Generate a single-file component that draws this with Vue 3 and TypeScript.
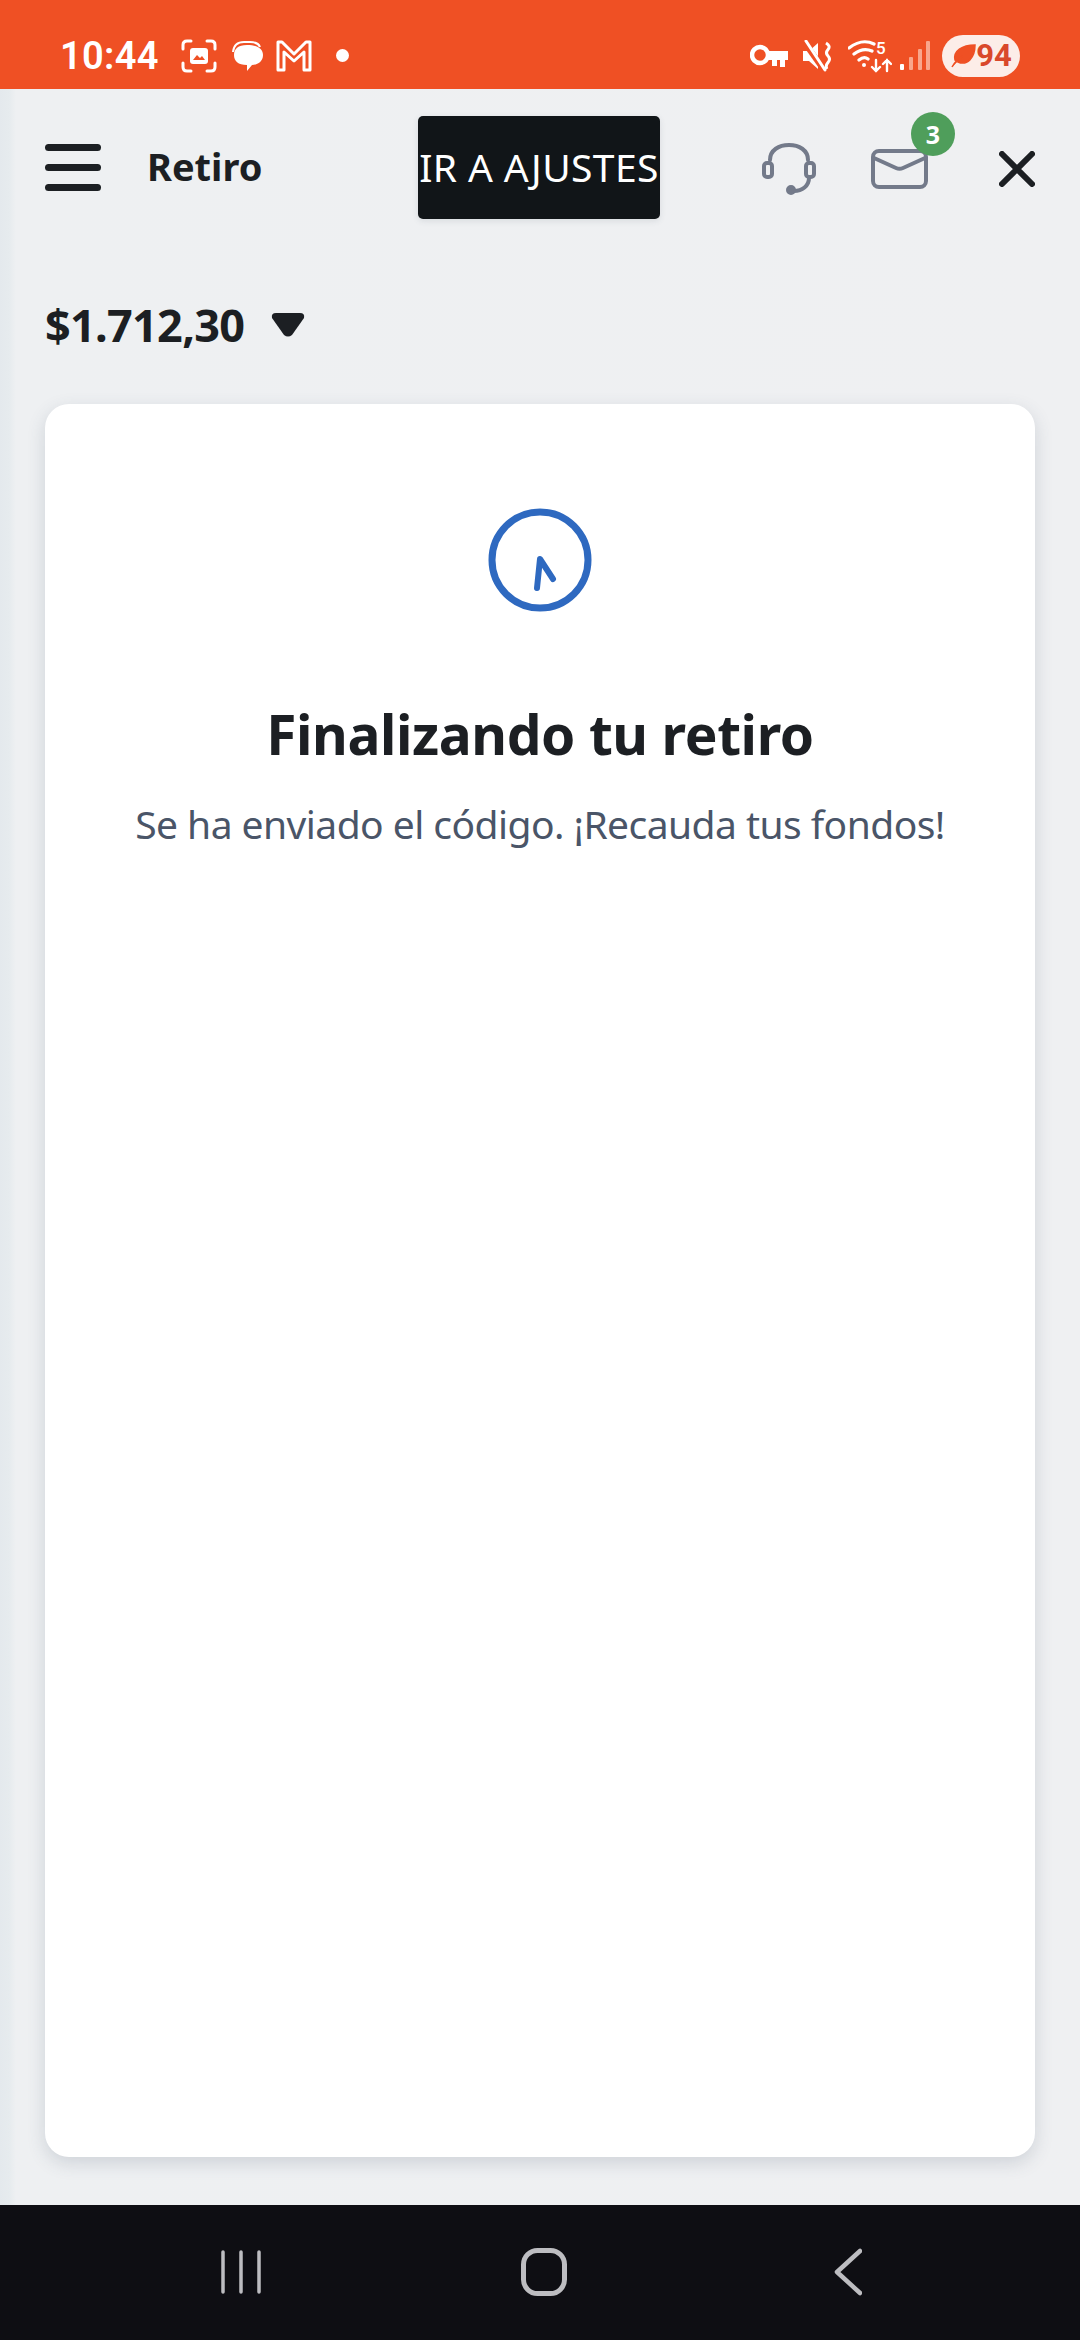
<script setup lang="ts">
const title = 'Finalizando tu retiro'
const message = 'Se ha enviado el código. ¡Recauda tus fondos!'
</script>

<template>
  <div class="screen">
    <div class="status">
      <span class="time">10:44</span>
      <svg class="s-shot" width="36" height="34" viewBox="0 0 36 34" fill="none" stroke="#fff" stroke-width="3" stroke-linecap="round">
        <path d="M2 10V6q0-4 4-4h4M26 2h4q4 0 4 4v4M34 24v4q0 4-4 4h-4M10 32H6q-4 0-4-4v-4" />
        <rect x="9" y="9" width="18" height="16" rx="3" fill="#fff" stroke="none" />
        <path d="M12 21l4-5 3 3 2-2 3 4z" fill="#EF5024" stroke="none" />
      </svg>
      <svg class="s-chat" width="32" height="32" viewBox="0 0 32 32">
        <path d="M2 12Q3 2 13 2h6q8 0 10 5" fill="none" stroke="#fff" stroke-width="2" />
        <path d="M16 5c10 0 16 3 16 10s-6 10-11 10l-5 6 0-6C7 25 3 21 3 15S7 5 16 5z" fill="#fff" />
      </svg>
      <svg class="s-gmail" width="36" height="32" viewBox="0 0 36 32" fill="none" stroke="#fff" stroke-linejoin="round">
        <path d="M2 30V2h4l12 12L30 2h4v28h-6V12l-10 9-10-9v18z" stroke-width="3" />
      </svg>
      <span class="dot"></span>
      <span class="spacer"></span>
      <svg class="s-key" width="38" height="26" viewBox="0 0 38 26" fill="none">
        <circle cx="10" cy="12" r="8" stroke="#fff" stroke-width="4.500" />
        <path d="M17 8h21v9h-3v7h-5v-7h-3v6h-5v-6h-5z" fill="#fff" />
      </svg>
      <svg class="s-mute" width="30" height="32" viewBox="0 0 30 32" fill="none">
        <path d="M1 11h6l9-8v26l-9-8H1z" fill="#fff" />
        <path d="M2 2l20 28" stroke="#EF5024" stroke-width="6" />
        <path d="M4 1l19 29" stroke="#fff" stroke-width="3" stroke-linecap="round" />
        <path d="M24 3q5 3 2 6.500t0 6.500 0 6.500-1 6.500" stroke="#fff" stroke-width="3" />
      </svg>
      <svg class="s-wifi" width="44" height="34" viewBox="0 0 44 34" fill="none" stroke="#fff" stroke-linecap="round">
        <path d="M1 9q13-10 25-4M6 15q9-7 18-3M11 21q5-4 9-1" stroke-width="3.200" />
        <circle cx="16" cy="26" r="2" fill="#fff" stroke="none" />
        <path d="M28 21v11M24 28l4 4 4-4M39 32V21M35 25l4-4 4 4" stroke-width="2.400" />
        <text x="28" y="15" class="five">5</text>
      </svg>
      <svg class="s-signal" width="30" height="32" viewBox="0 0 30 32" fill="#F9A68C">
        <rect x="0" y="24" width="4" height="6" rx="1" fill="#fff" />
        <rect x="9" y="17" width="4" height="13" rx="1" />
        <rect x="18" y="9" width="4" height="21" rx="1" />
        <rect x="26" y="1" width="4" height="29" rx="1" />
      </svg>
      <div class="battery">
        <svg width="26" height="26" viewBox="0 0 26 26">
          <path d="M2 24Q6 17 13 13M5 17C3 8 12 2 25 2c0 13-8 21-17 17z" fill="#EF5024" stroke="#EF5024" stroke-width="1.500" />
        </svg>
        <span>94</span>
      </div>
    </div>

    <div class="main">
      <header class="topbar">
        <button class="burger" aria-label="Menú"><i></i><i></i><i></i></button>
        <span class="page-title">Retiro</span>
        <button class="settings">IR A AJUSTES</button>
        <svg class="headset" width="54" height="52" viewBox="0 0 54 52" fill="none" stroke="#737A8A" stroke-width="4" stroke-linecap="round" stroke-linejoin="round">
          <path d="M8 17C8 7 17 2 27 2s19 5 19 15" />
          <rect x="2" y="20" width="8" height="14" rx="3" />
          <rect x="44" y="20" width="8" height="14" rx="3" />
          <path d="M47 35c0 8-7 13-15 13" />
          <circle cx="29" cy="47" r="3" fill="#737A8A" />
        </svg>
        <div class="mail">
          <svg width="57" height="40" viewBox="0 0 57 40" fill="none" stroke="#737A8A" stroke-width="4" stroke-linejoin="round" stroke-linecap="round">
            <rect x="2" y="2" width="53" height="36" rx="6" />
            <path d="M3 9l22 10q3.500 1.500 7 0L54 9" />
          </svg>
          <span class="badge">3</span>
        </div>
        <svg class="close" width="36" height="36" viewBox="0 0 36 36" stroke="#1C1F23" stroke-width="6" stroke-linecap="round">
          <path d="M3 3l30 30M33 3L3 33" />
        </svg>
      </header>

      <div class="balance">
        <span>$1.712,30</span>
        <svg width="34" height="26" viewBox="0 0 34 26">
          <path d="M5 1h24q5 0 4 5L21 23q-4 3-8 0L1 6Q0 1 5 1z" fill="#1C1F23" />
        </svg>
      </div>

      <section class="card">
        <svg class="clock" width="106" height="106" viewBox="0 0 106 106" fill="none" stroke="#2E69C0" stroke-linecap="round" stroke-linejoin="round">
          <circle cx="53" cy="53" r="48" stroke-width="7" />
          <path d="M50 81l3-29 13 20" stroke-width="6" />
        </svg>
        <h1>{{ title }}</h1>
        <p>{{ message }}</p>
      </section>
    </div>

    <nav class="navbar">
      <svg width="44" height="46" viewBox="0 0 44 46" stroke="#BDBDC1" stroke-width="3.500" stroke-linecap="round">
        <path d="M3 3v40M21 3v40M39 3v40" />
      </svg>
      <svg class="nav-home" width="46" height="48" viewBox="0 0 46 48" fill="none" stroke="#BDBDC1" stroke-width="5">
        <rect x="2.500" y="2.500" width="41" height="43" rx="14" />
      </svg>
      <svg class="nav-back" width="28" height="48" viewBox="0 0 28 48" fill="none" stroke="#BDBDC1" stroke-width="4.500" stroke-linecap="round" stroke-linejoin="round">
        <path d="M26 3L3 24l23 21" />
      </svg>
    </nav>
  </div>
</template>

<style>
html, body { margin: 0; background: #EFF0F2; }
</style>

<style scoped>
.screen {
  width: 1080px;
  height: 2340px;
  display: flex;
  flex-direction: column;
  font-family: "Noto Sans", "Open Sans", sans-serif;
  color: #1C1F23;
  overflow: hidden;
}
.status {
  height: 89px;
  flex: none;
  box-sizing: border-box;
  padding: 22px 60px 0 60px;
  background: #EF5024;
  display: flex;
  align-items: center;
  color: #fff;
}
.time {
  font-family: Roboto, sans-serif;
  font-weight: 600;
  font-size: 38px;
  width: 102px;
  letter-spacing: 0.3px;
}
.s-shot { margin-left: 19px; }
.s-chat { margin-left: 14px; }
.s-gmail { margin-left: 13px; }
.dot { width: 13px; height: 13px; border-radius: 50%; background: #fff; margin-left: 24px; }
.spacer { flex: 1; }
.s-key { margin-right: 14px; }
.s-mute { margin-right: 16px; }
.s-wifi { margin-right: 8px; }
.s-signal { margin-right: 12px; }
.five { font: 500 17px Roboto, sans-serif; fill: #fff; stroke: none; }
.battery {
  width: 78px;
  height: 42px;
  border-radius: 21px;
  background: #FCEDE8;
  color: #D9482A;
  display: flex;
  align-items: center;
  justify-content: center;
  font: 700 31px Roboto, sans-serif;
}
.main {
  flex: 1;
  min-height: 0;
  display: flex;
  flex-direction: column;
  box-sizing: border-box;
  padding: 27px 45px 48px;
  background: linear-gradient(90deg, #E4E9ED 0, #E6EBEE 9px, #EEF0F2 16px, #EFF0F2 100%);
}
.topbar {
  height: 103px;
  flex: none;
  display: flex;
  align-items: center;
}
.burger {
  width: 56px;
  height: 47px;
  padding: 0;
  border: 0;
  background: none;
  display: flex;
  flex-direction: column;
  justify-content: space-between;
  flex: none;
}
.burger i {
  display: block;
  height: 7px;
  border-radius: 4px;
  background: #1C1F23;
}
.page-title {
  margin-left: 46px;
  width: 272px;
  font-size: 38px;
  line-height: 50px;
  padding-bottom: 3px;
  font-weight: 700;
  letter-spacing: 0;
}
.settings {
  width: 242px;
  height: 103px;
  flex: none;
  padding: 0 0 3px;
  border: 0;
  border-radius: 5px;
  background: #111518;
  color: #fff;
  font-family: inherit;
  font-size: 39px;
  font-weight: 400;
  letter-spacing: 0.4px;
  white-space: nowrap;
  box-shadow: 0 2px 6px rgba(60, 70, 90, 0.12);
}
.headset { margin-left: 102px; flex: none; position: relative; top: 1px; }
.mail {
  margin-left: 55px;
  width: 57px;
  height: 40px;
  position: relative;
  top: 1px;
  flex: none;
}
.mail svg { display: block; }
.badge {
  position: absolute;
  left: 40px;
  top: -37px;
  width: 44px;
  height: 44px;
  border-radius: 50%;
  background: #4F9E5B;
  color: #fff;
  font-size: 25px;
  font-weight: 700;
  display: flex;
  align-items: center;
  justify-content: center;
}
.close { margin-left: 71px; flex: none; position: relative; top: 1px; }
.balance {
  margin-top: 75px;
  height: 60px;
  flex: none;
  display: flex;
  align-items: center;
  font-size: 45px;
  font-weight: 700;
  letter-spacing: -0.7px;
}
.balance svg { margin-left: 27px; position: relative; top: 1px; }
.card {
  flex: 1;
  margin-top: 50px;
  min-height: 0;
  background: #fff;
  border-radius: 24px;
  box-shadow: 0 6px 18px rgba(60, 80, 100, 0.18);
  display: flex;
  flex-direction: column;
  align-items: center;
  padding-top: 103px;
  box-sizing: border-box;
}
.clock { display: block; }
.card h1 {
  margin: 91px 0 0;
  font-size: 55px;
  line-height: 60px;
  font-weight: 700;
  letter-spacing: -0.4px;
  color: #1C1F23;
}
.card p {
  margin: 35px 0 0;
  font-size: 39px;
  line-height: 50px;
  font-weight: 400;
  letter-spacing: -0.55px;
  color: #4A5568;
}
.navbar {
  height: 135px;
  flex: none;
  background: #0E0E13;
  display: flex;
  align-items: center;
  box-sizing: border-box;
  padding: 0 0 2px 220px;
}
.nav-home { margin-left: 257px; }
.nav-back { margin-left: 267px; }
</style>
